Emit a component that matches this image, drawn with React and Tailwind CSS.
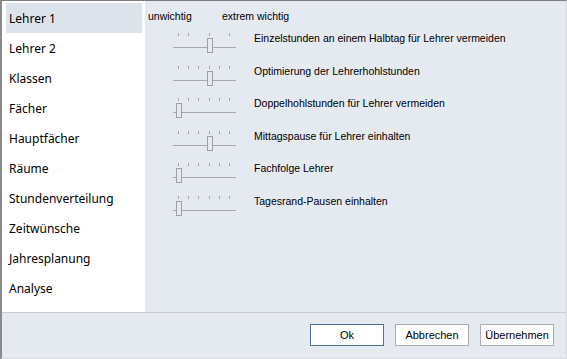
const navItems = [
  'Lehrer 1',
  'Lehrer 2',
  'Klassen',
  'Fächer',
  'Hauptfächer',
  'Räume',
  'Stundenverteilung',
  'Zeitwünsche',
  'Jahresplanung',
  'Analyse',
];

// thumb: index of the tick it sits on (0..5), ticks: which tick marks are drawn
const rules = [
  { label: 'Einzelstunden an einem Halbtag für Lehrer vermeiden', thumb: 3, ticks: [0, 1, 3, 5] },
  { label: 'Optimierung der Lehrerhohlstunden', thumb: 3, ticks: [0, 1, 2, 3, 4, 5] },
  { label: 'Doppelhohlstunden für Lehrer vermeiden', thumb: 0, ticks: [0, 1, 2, 3, 4, 5] },
  { label: 'Mittagspause für Lehrer einhalten', thumb: 3, ticks: [0, 1, 2, 3, 4, 5] },
  { label: 'Fachfolge Lehrer', thumb: 0, ticks: [0, 1, 2, 3, 4, 5] },
  { label: 'Tagesrand-Pausen einhalten', thumb: 0, ticks: [0, 1, 2, 3, 4, 5] },
];

const tickX = [5, 15, 25, 36, 46, 56];

function Slider({ thumb, ticks }) {
  return (
    <div className="relative w-[63px] h-[24px] shrink-0">
      {ticks.map((t) => (
        <div
          key={t}
          className="absolute top-0 w-px h-[3px] bg-[#a8a8a8]"
          style={{ left: tickX[t] }}
        />
      ))}
      <div className="absolute left-0 right-0 top-[14px] h-px bg-[#a8a8a8]" />
      <div
        className="absolute top-[5px] w-[6px] h-[15px] border border-[#a0a0a0] bg-[#e6e9ef]"
        style={{ left: tickX[thumb] - 2 }}
      />
    </div>
  );
}

export default function App() {
  return (
    <div className="w-[567px] h-[359px] bg-[#e5e9f0] border-t border-t-[#7d7d7d] border-l-2 border-l-[#8a8a8a] border-r border-r-[#d4d8de] border-b border-b-[#d4d8de] flex flex-col overflow-hidden">
      <div className="flex h-[311px]">
        <div className="w-[143px] bg-white pt-[2px] pl-[4px] pr-[3px] font-['Noto_Sans',sans-serif] text-[12px] text-black">
          {navItems.map((item, i) => (
            <div
              key={item}
              className={`h-[30px] flex items-center pl-[3px] pt-[2px] ${i === 0 ? 'bg-[#dce3ea]' : ''}`}
            >
              {item}
            </div>
          ))}
        </div>
        <div className="flex-1 pl-[3px] pt-[9px] font-['Liberation_Sans',sans-serif] text-[10.5px] text-black">
          <div className="flex h-[14px] items-center">
            <span className="w-[74px]">unwichtig</span>
            <span>extrem wichtig</span>
          </div>
          <div className="pt-[8px]">
            {rules.map((r) => (
              <div key={r.label} className="flex h-[32.6px] items-start">
                <div className="pl-[25px] pr-[18px] pt-[1px]">
                  <Slider thumb={r.thumb} ticks={r.ticks} />
                </div>
                <span className="leading-[13px]">{r.label}</span>
              </div>
            ))}
          </div>
        </div>
      </div>
      <div className="h-px bg-[#c9cdd3]" />
      <div className="flex-1 flex justify-end items-start pt-[11px] pr-[12px] gap-[11px] font-['Liberation_Sans',sans-serif] text-[11px] text-black">
        <button className="w-[74px] h-[22px] bg-white border border-[#4d72a3]">Ok</button>
        <button className="w-[74px] h-[22px] bg-white border border-[#adadad]">Abbrechen</button>
        <button className="w-[74px] h-[22px] bg-white border border-[#adadad]">Übernehmen</button>
      </div>
    </div>
  );
}
